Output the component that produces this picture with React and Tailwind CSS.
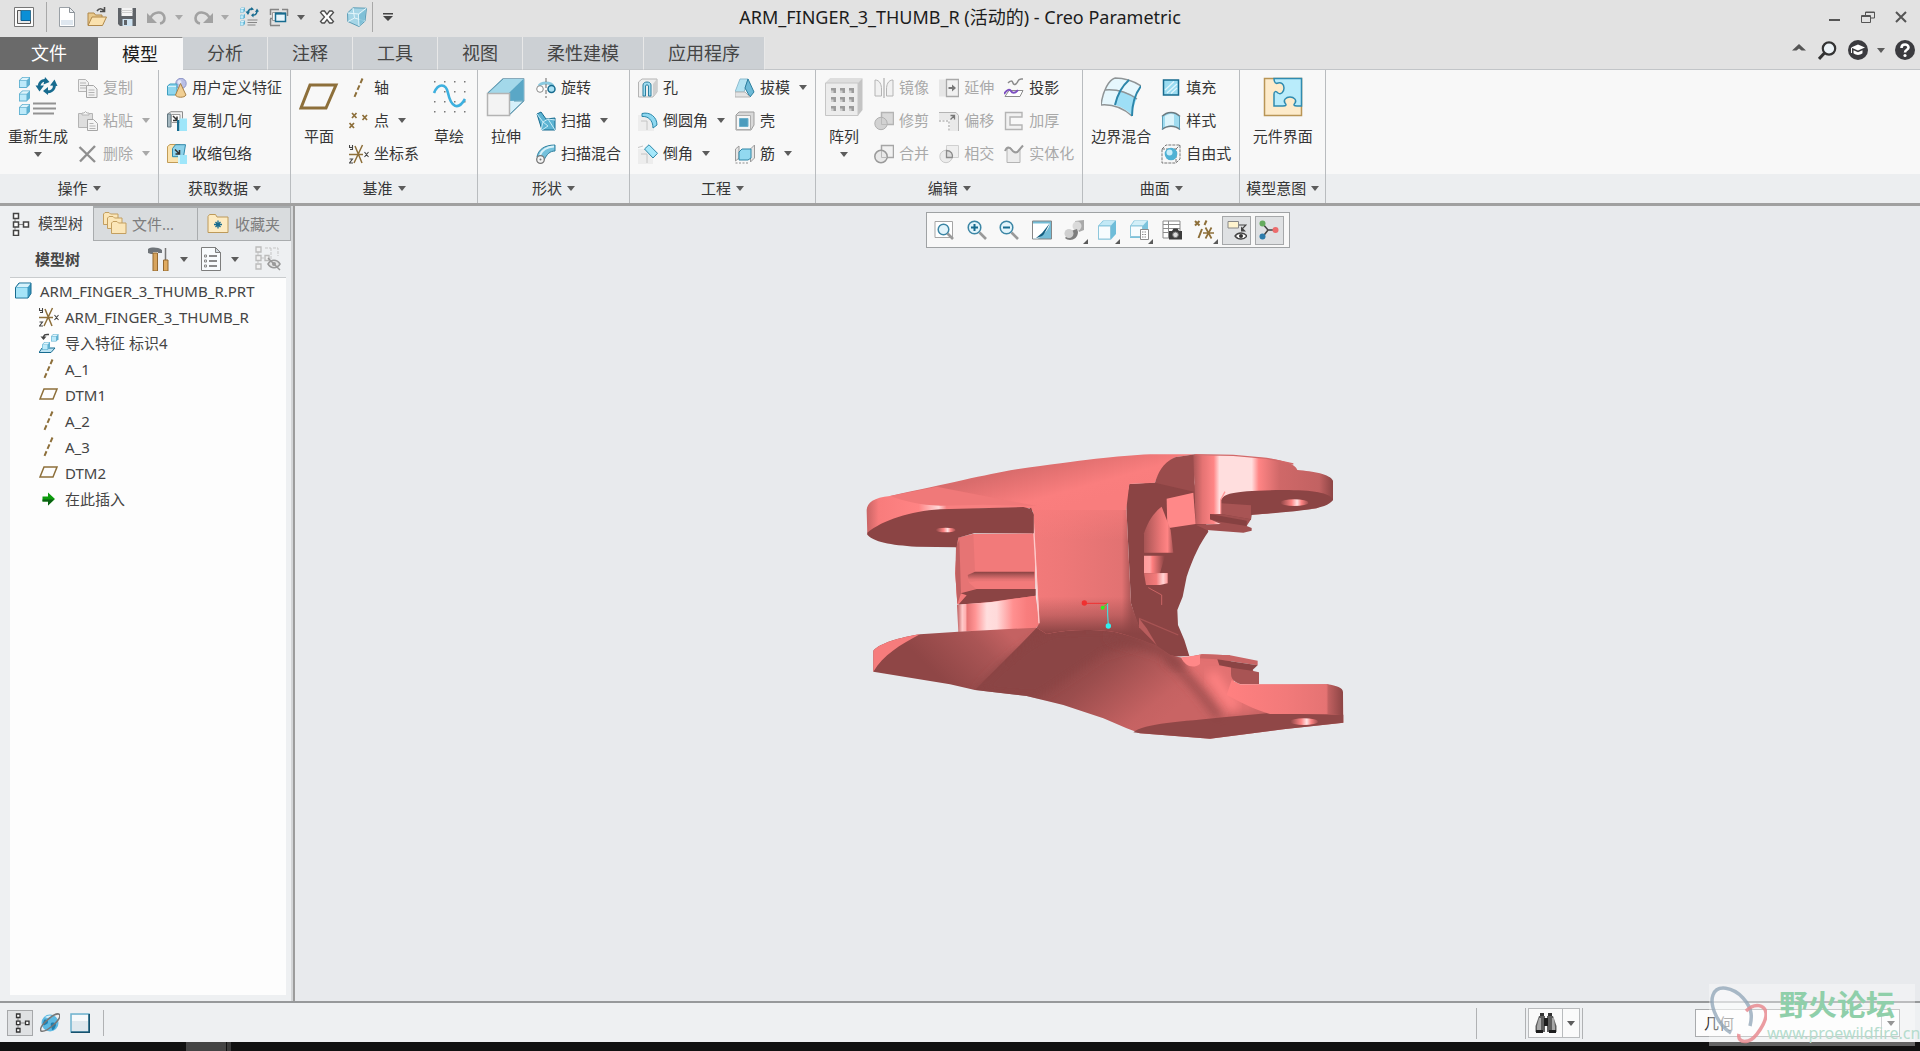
import React, { useState } from 'react';

/* ---------- small shared pieces ---------- */

function Caret({ light }) {
  return (
    <svg width="8" height="5" viewBox="0 0 8 5" className="shrink-0">
      <path d="M0 0h8L4 5z" fill={light ? '#a9a9a9' : '#5c5c5c'} />
    </svg>
  );
}

function Svg({ size = 20, box = 20, children }) {
  return (
    <svg width={size} height={size} viewBox={`0 0 ${box} ${box}`} fill="none" className="shrink-0" aria-hidden="true">
      {children}
    </svg>
  );
}

function Cube({ x, y, s = 8 }) {
  return (
    <g transform={`translate(${x} ${y}) scale(${s / 10})`}>
      <path d="M0 3l3-3h7v7l-3 3H0z" fill="#5fb0d0" />
      <path d="M.8 3L3.400.6H9.400L7 3z" fill="#dff4fb" />
      <path d="M.8 3.600h6v5.600h-6z" fill="#bdeafa" />
    </g>
  );
}

const DARK = '#5a5a5a';
const BLUE = '#176b8f';
const GOLD = '#8d6f3a';
const OFF = '#b4b4b4';

/* ---------- icons, 20px grid unless a bigger box is given ---------- */

const icons = {
  app: (
    <Svg>
      <path d="M.5.5h19v19H.5z" fill="#fdfdfd" stroke="#777" />
      <path d="M3.5 3.5h13v13h-13z" fill="#e8e8e8" stroke="#555" />
      <path d="M7 3.5h9.5v10H7z" fill="#0a8fd6" />
      <path d="M7 4v9.5h9.5" stroke="#0a5f94" />
    </Svg>
  ),
  newFile: (
    <Svg>
      <path d="M2.5.5h10l5 5v14h-15z" fill="#fff" stroke="#9aa0a6" />
      <path d="M4 13h12v5H4z" fill="#dfe7ef" />
      <path d="M12.5.5v5h5z" fill="#eef1f4" stroke="#8c9298" />
    </Svg>
  ),
  open: (
    <Svg>
      <path d="M1 18V6h6l1.500 2H15v3" fill="#e9c98c" stroke="#b0884a" />
      <path d="M1 18.500L5 10h14.500L15.500 18.500z" fill="#fae1ae" stroke="#b0884a" />
      <path d="M10 4c2-3 5-3 7 0M17.500 0v4.500H13" stroke="#4d4d4d" strokeWidth="1.600" />
    </Svg>
  ),
  save: (
    <Svg>
      <path d="M1 1h18v18H3l-2-2z" fill="#5f6368" />
      <path d="M4.500 1h11v8h-11z" fill="#f4f4f4" />
      <path d="M4.500 3.500h11M4.500 5.500h11" stroke="#cfcfcf" />
      <path d="M5.500 12h10v7h-10z" fill="#cfe3f1" />
      <path d="M7 13h3v5H7z" fill="#5f6368" />
    </Svg>
  ),
  undo: (
    <Svg>
      <path d="M3 12C6 4 17 3 17.500 11c0 3-2 5-4.500 5.500" stroke="#a2a2a2" strokeWidth="2.600" />
      <path d="M0 6v10h10z" fill="#a2a2a2" />
    </Svg>
  ),
  redo: (
    <Svg>
      <path d="M17 12C14 4 3 3 2.500 11c0 3 2 5 4.500 5.500" stroke="#a2a2a2" strokeWidth="2.600" />
      <path d="M20 6v10H10z" fill="#a2a2a2" />
    </Svg>
  ),
  regenSmall: (
    <Svg>
      <Cube x={1} y={0.5} s={5} />
      <Cube x={1} y={7} s={5} />
      <Cube x={1} y={13.5} s={5} />
      <path d="M8.500 6C9.500 2.500 11 1.500 13 2M18 4c0 3-2 4.500-4 4" stroke={BLUE} strokeWidth="1.500" />
      <path d="M12.500 0l2.500 2.500-3.500 1zM6.500 4.500h4.500L9 8zM16 5L20 4.500 18 1.500zM14.500 6v4.500L12 8.200z" fill={BLUE} />
      <path d="M8.500 13h10M8.500 15.500h9.500M8.500 18h8" stroke="#868686" strokeWidth="1.200" />
    </Svg>
  ),
  windows: (
    <Svg>
      <path d="M1 2.500h9M1.500 2v6M13 2.500h6M18.500 2v7M1 11.500h4M1 18.500h10M1.500 12v6" stroke="#858585" strokeWidth="1.500" />
      <path d="M3.500 5.500h9v8h-9z" fill="#f4f4f4" stroke="#9b9b9b" />
      <path d="M6.500 6.500h10v8h-10z" fill="#e7f5fb" stroke={BLUE} strokeWidth="1.500" />
      <path d="M6 6.500h11" stroke={BLUE} strokeWidth="2" />
    </Svg>
  ),
  closeWindow: (
    <Svg>
      <path d="M3.500 5.500L5 4h2.500L10 7.500 12.500 4H15l1.500 1.500L12.500 10l4 4.500L15 16h-2.500L10 12.500 7.500 16H5l-1.500-1.500 4-4.500z" fill="#fff" stroke="#4d4d4d" strokeWidth="1.300" />
    </Svg>
  ),
  glass: (
    <Svg>
      <path d="M.5 6L6 .8l13.500.4-1.500 13L12 19.500.8 14.500z" fill="#a5d5e6" stroke="#5c9db6" />
      <path d="M6 1l1.500 10L1 14.500M7.500 11l10.500 3M.5 6l11 1L19.500 1M11.500 7l.5 12" stroke="#e5f6fb" />
      <path d="M12 8l6.500-5.500-1 11L12.500 18z" fill="#6fb7d0" opacity=".7" />
    </Svg>
  ),
  regen: (
    <Svg size={40} box={40}>
      <Cube x={1} y={0} s={11} />
      <Cube x={1} y={13.5} s={11} />
      <Cube x={1} y={27} s={11} />
      <path d="M21 9c1-4.500 4-6 7-5.500M36.500 8c0 5-4 7.500-8 6.500" stroke={BLUE} strokeWidth="2.800" />
      <path d="M27 0l4.500 5-6 2.500zM17.500 8.500H26l-4.500 6zM32 8.500l7.500.5-3-6.500zM30 10v8l-5-4z" fill={BLUE} />
      <path d="M15 26.500h23M15 31.500h23M15 36.500h21" stroke="#929292" strokeWidth="2" />
    </Svg>
  ),
  copy: (
    <Svg>
      <path d="M.5 1.500h7l3 3v9H.5z" fill="#f0f0f0" stroke={OFF} />
      <path d="M2 5h6M2 7.500h6M2 10h6" stroke={OFF} />
      <path d="M8.500 7.500h7l3.500 3.500v8.500H8.500z" fill="#f2f2f2" stroke="#a6a6a6" />
      <path d="M10.500 12h6M10.500 14.500h6M10.500 17h6" stroke={OFF} />
    </Svg>
  ),
  paste: (
    <Svg>
      <path d="M.5 2.500h14v14H.5z" fill="#dedede" stroke={OFF} />
      <path d="M4 4V2h2l1.500-1.500L9 2h2v2z" fill="#f5f5f5" stroke={OFF} />
      <path d="M9.500 8.500h6l4 4v7h-10z" fill="#f5f5f5" stroke="#a6a6a6" />
      <path d="M11.500 12.500h4M11.500 15h6M11.500 17.500h6" stroke={OFF} />
    </Svg>
  ),
  remove: (
    <Svg>
      <path d="M1.500 3l15.500 15M17 2L2 17.500" stroke="#8f8f8f" strokeWidth="2.400" />
    </Svg>
  ),
  udf: (
    <Svg>
      <circle cx="14" cy="5.500" r="5.200" fill="#b9bfe6" stroke="#8f96c8" />
      <circle cx="12.500" cy="4" r="2" fill="#e4e7f7" />
      <path d="M.5 8l2.500-2h7v9l-2 2H.5z" fill="#8fd6ee" stroke="#3f9fc0" />
      <path d="M1 8.500h8" stroke="#d4f1fa" />
      <path d="M13.500 5.500L8.500 17c1 3 9 3 10.500 0z" fill="#f1cf93" stroke="#a98146" />
    </Svg>
  ),
  copyGeom: (
    <Svg>
      <path d="M.5 3L4 .7h11.500v7" fill="#f1f1f1" stroke="#8c8c8c" />
      <path d="M.5 3v13h3.500V3z" fill="#a6b9c1" stroke="#607680" />
      <path d="M4.500 3.500h8.500v8H4.500z" fill="#fff" stroke="#9c9c9c" />
      <path d="M6 5l4 4M10 5.500v4H6" stroke="#333" strokeWidth="1.500" />
      <path d="M10 9h2.500v11H10z" fill={BLUE} />
      <path d="M12.500 7.500H20V20h-7.500z" fill="#9fe6fa" />
    </Svg>
  ),
  shrink: (
    <Svg>
      <path d="M.5 2.500L3 .5h10v18H.5z" fill="#fbe3ae" stroke="#c19c57" />
      <path d="M5.500 4.500L8.500.7h10l-2 12h-11z" fill="#8ed2ea" stroke="#2f88aa" />
      <path d="M8 5.500l4 4M12.500 6v4H8.500" stroke="#333" strokeWidth="1.500" />
      <path d="M11 11h9v9h-9z" fill="#9fe6fa" />
      <path d="M11 11h2v9h-2z" fill="#d1f4fc" />
    </Svg>
  ),
  plane: (
    <Svg size={40} box={40}>
      <path d="M11 8h26L27 31H2z" stroke={GOLD} strokeWidth="3" />
    </Svg>
  ),
  axis: (
    <Svg>
      <path d="M13.500.5L5 20" stroke={GOLD} strokeWidth="2" strokeDasharray="5 2.500" />
    </Svg>
  ),
  point: (
    <Svg>
      <path d="M3 2l4.500 5M7.500 2L3 7M13.500 4l4.500 5M18 4l-4.500 5M.5 12l4.500 5M5 12L.5 17" stroke={GOLD} strokeWidth="1.700" />
    </Svg>
  ),
  csys: (
    <Svg>
      <path d="M0 10.500h14M6 2l7 17M13.500 1L5 19" stroke={GOLD} strokeWidth="1.500" />
      <path d="M.5 1v2.500h3M3.500 1v4.500H1M15.500 8l4 5M19.500 8l-4 5M.5 15h3L.5 19h3.500" stroke="#444" strokeWidth="1.100" />
    </Svg>
  ),
  sketch: (
    <Svg size={40} box={40}>
      {[4, 14, 24, 34].map(y => [5, 15, 25, 35].map(x => (
        <path key={`${x}-${y}`} d={`M${x} ${y}h1.500v1.500h-1.500z`} fill="#777" />
      )))}
      <path d="M5 16C9 6 17 6 19 16c3 14 10 18 17 6" stroke="#3db0df" strokeWidth="2.600" />
    </Svg>
  ),
  extrude: (
    <Svg size={40} box={40}>
      <path d="M1.500 16L17 1.500h21V24L23 38.500" fill="#d6f0fa" stroke="#8ab" />
      <path d="M2 16L17 2h20.500L23 16z" fill="#a3d8ea" />
      <path d="M37.500 2v22L23 16z" fill="#5aa7c6" />
      <path d="M37.500 2L23 16v8l14.500-.5z" fill="#5aa7c6" />
      <path d="M17 2L2 16M23 38l14.500-14H28" stroke="#5797b0" />
      <path d="M1.500 16.500h22v22h-22z" fill="#f3f3f3" stroke="#b3b3b3" strokeWidth="1.500" />
    </Svg>
  ),
  revolve: (
    <Svg>
      <path d="M3 8c2-4 12-4 14 0" stroke="#8ac9df" strokeWidth="3" />
      <circle cx="4" cy="11" r="3.300" fill="#fff" stroke="#8a8a8a" />
      <circle cx="15.500" cy="11" r="3.500" fill="#a9e0f3" stroke={BLUE} strokeWidth="1.500" />
      <path d="M10 0v20" stroke="#666" strokeDasharray="4 2" />
    </Svg>
  ),
  sweep: (
    <Svg>
      <path d="M1 3l4-2 5 7 9-1v12H6z" fill="#5cb3d2" stroke={BLUE} />
      <path d="M1 3l6 8-2 8M7 11l5-3 7 11M12 8l7 1M7 11l5 4-6 4" stroke="#c8ecf7" />
    </Svg>
  ),
  sweptBlend: (
    <Svg>
      <path d="M1 13C2 6 8 1 19 1v6c-5 0-8 3-11 9z" fill="#74c1dc" stroke="#2f7f9e" />
      <path d="M4 11c2-5 6-8 14-8.500" stroke="#d8f2fa" strokeWidth="2" />
      <circle cx="4.500" cy="15.500" r="3.800" fill="#f3f3f3" stroke="#777" strokeWidth="1.300" />
      <circle cx="4.500" cy="15.500" r="1" fill="#777" />
    </Svg>
  ),
  hole: (
    <Svg>
      <path d="M.5 4L4 1h15v13l-4 5H.5z" fill="#eee" stroke="#b4b4b4" />
      <path d="M5 18V7c0-4 8-4 8 0v11h-2.500V8c0-1.500-3-1.500-3 0v10z" fill="#9edcf1" stroke="#2b7f9f" />
      <path d="M15 6l4-5v13l-4 5z" fill="#cfcfcf" />
    </Svg>
  ),
  round: (
    <Svg>
      <path d="M0 4h6c6 1 9 5 10 10v6H0z" fill="#ededed" />
      <path d="M4 2.500C12 .5 19 6 19 14l-4 3C15 9 10 5 4 5.500z" fill="#8fd8f0" stroke="#2c87a9" />
      <path d="M3 10h6v9" stroke="#c4c4c4" />
    </Svg>
  ),
  chamfer: (
    <Svg>
      <path d="M0 5h7l8 8v7H0z" fill="#ededed" />
      <path d="M6.500 5L11 .8l8.500 8.500L15 14z" fill="#a5e8fb" stroke="#2c87a9" />
      <path d="M0 3.500L5 2M3 10h6v9" stroke="#c4c4c4" />
    </Svg>
  ),
  draft: (
    <Svg>
      <path d="M0 14L5 1h8L9 14z" fill="#b4e3f2" stroke="#8dbccf" />
      <path d="M13 1l6 13-4 5-5-9z" fill="#6dbad7" stroke="#2c7f9f" />
      <path d="M0 14h10l5 5H0z" fill="#e4e4e4" stroke="#b4b4b4" />
    </Svg>
  ),
  shell: (
    <Svg>
      <path d="M1 4l3-3h15v13l-3 5H1z" fill="#d9d9d9" stroke="#9d9d9d" />
      <path d="M1.500 4.500h14v14h-14z" fill="#f6f6f6" stroke="#adadad" />
      <path d="M4.500 7.500h8.500v8H4.500z" fill="#4d9cbd" stroke="#6bb0cb" />
    </Svg>
  ),
  rib: (
    <Svg>
      <path d="M.5 5L4 2v12l-3.500 3zM15.500 5L19.500 1v13l-4 4z" fill="#e5e5e5" stroke="#9b9b9b" />
      <path d="M4 8l3-3h9v9l-3 2H4z" fill="#92d9f0" stroke="#3186a6" />
      <path d="M.5 19h14" stroke="#8d8d8d" strokeDasharray="2 1.500" />
    </Svg>
  ),
  pattern: (
    <Svg size={40} box={40}>
      <path d="M1.500 6L6 1.500h32.500V33L34 38.500H1.500z" fill="#c4c4c4" />
      <path d="M1.500 6L6 1.500h32.500L34 6z" fill="#dedede" />
      <path d="M1.500 6H34v32.500H1.500z" fill="#ececec" stroke="#c6c6c6" />
      {[11, 20, 29].map(y => [7, 16, 25].map(x => (
        <g key={`${x}-${y}`}>
          <path d={`M${x} ${y}h5v5h-5z`} fill="#9b9b9b" />
          <path d={`M${x} ${y + 2.5}h2.500v2.500h-2.500z`} fill="#cfcfcf" />
        </g>
      )))}
    </Svg>
  ),
  mirror: (
    <Svg>
      <path d="M1 2c5 0 6.500 5 6.500 9v7H1zM19 2c-5 0-6.500 5-6.500 9v7H19z" fill="#f1f1f1" stroke={OFF} />
      <path d="M10 0v20" stroke="#a0a0a0" />
    </Svg>
  ),
  trim: (
    <Svg>
      <path d="M7.500 1.500h12v12h-12z" fill="#d9d9d9" stroke={OFF} strokeWidth="1.500" />
      <circle cx="7" cy="12.500" r="6.200" fill="#d2d2d2" stroke="#b0b0b0" />
      <path d="M7.500 7v6.500H13" stroke="#bbb" />
    </Svg>
  ),
  merge: (
    <Svg>
      <path d="M7.500 1.500h12v12h-12z" fill="#f1f1f1" stroke="#a6a6a6" strokeWidth="1.500" />
      <circle cx="7" cy="12.500" r="6.200" fill="#e9e9e9" stroke="#9a9a9a" strokeWidth="1.500" />
      <path d="M7.500 7v6.500H13" stroke="#bbb" />
    </Svg>
  ),
  extend: (
    <Svg>
      <path d="M0 1.500h7v17H0z" fill="#e6e6e6" />
      <path d="M7.500 1.500h12v17h-12z" fill="#f1f1f1" stroke="#a9a9a9" strokeWidth="1.300" />
      <path d="M9.500 10h5" stroke="#777" strokeWidth="2" />
      <path d="M13 6.500l4 3.500-4 3.500z" fill="#777" />
    </Svg>
  ),
  offset: (
    <Svg>
      <path d="M0 1.500h17l2.500 2.500v16H11V9H0z" fill="#e9e9e9" />
      <path d="M0 1.500h17l2.500 3V20" stroke={OFF} />
      <path d="M0 10h10v10" stroke="#999" strokeDasharray="2 1.500" />
      <path d="M11.500 8.500L15 5M11.500 4.500h4v4" stroke="#777" strokeWidth="1.300" />
    </Svg>
  ),
  intersect: (
    <Svg>
      <path d="M7.500 1.500h12v12h-12z" fill="#efefef" stroke="#d0d0d0" />
      <circle cx="7" cy="12.500" r="6.200" fill="#ececec" stroke="#cacaca" />
      <path d="M7.500 6.500c5 0 6.500 4 5.800 7H7.500z" fill="#dcdcdc" stroke="#8c8c8c" strokeWidth="1.300" />
    </Svg>
  ),
  project: (
    <Svg>
      <path d="M4 5c2-2 4-3 5 0s4 1 5-2 3-2 5-2" stroke="#8b8b8b" strokeWidth="1.500" />
      <path d="M1 18.500l4-6h14l-3 6z" fill="#fff" stroke="#8b8b8b" />
      <path d="M0 16c3-5 6-5 7-3s4 3 7-1" stroke="#7d4fc0" strokeWidth="2" />
    </Svg>
  ),
  thicken: (
    <Svg>
      <path d="M18 1.500H1.500v17H18v-4.500H6V6h12z" fill="#f1f1f1" stroke={OFF} strokeWidth="1.400" />
    </Svg>
  ),
  solidify: (
    <Svg>
      <path d="M3 6v12.500h13V5c-2 5-7 5-8 1S4 4 3 6z" fill="#ececec" stroke={OFF} />
      <path d="M1 7c2-5 5-4 6.500-1.500S13 10 15 6l4-4.500" stroke="#9a9a9a" strokeWidth="2" />
    </Svg>
  ),
  boundary: (
    <Svg size={40} box={40}>
      <path d="M0 28C2 13 8 3 14 1c9 0 17 2 26 8-6 8-9 20-9 30C22 31 12 27 0 28z" fill="#e6f7fd" />
      <path d="M18 14c7 1 13 3 18 7-3 6-4 12-5 17-4-4-10-8-17-10z" fill="#9edff6" />
      <path d="M0 28C2 13 8 3 14 1M4 13c12-1 22 2 32 9M0 28c12-1 22 3 31 11M14 1c9 0 17 2 26 8" stroke="#8f9496" strokeWidth="1.500" />
      <path d="M28 3c-8 7-12 16-14 25M40 9c-6 8-9 20-9 30" stroke="#2c86aa" strokeWidth="2" />
    </Svg>
  ),
  fill: (
    <Svg>
      <path d="M2.500 2h15v15h-15z" fill="#9bdcf1" stroke={BLUE} strokeWidth="1.500" />
      <path d="M4 12L13 3.500M6 15L16 6M10 15.500l6-5.500" stroke="#e0f6fd" strokeWidth="1.200" />
    </Svg>
  ),
  style: (
    <Svg>
      <path d="M1.500 5c5-5 12-5 17 0v13c-5-4-12-4-17 0z" fill="#9fdcf0" />
      <path d="M4 5C8 2.500 11 2.500 13 3.500v11C10 14 7 14.500 4 16z" fill="#dcf4fb" />
      <path d="M1 5.500c5-5.500 13-5.500 18 0M1 18.500c5-4.500 13-4.500 18 0" stroke="#6b7a80" strokeWidth="1.500" />
      <path d="M1.500 5v13.500M18.500 5v13.500" stroke="#5c9db6" />
    </Svg>
  ),
  freestyle: (
    <Svg>
      <path d="M1 5l4-4h14v14l-4 4H1zM1 5h14v14M15 5l4-4" stroke="#777" strokeDasharray="3 1" />
      <circle cx="10" cy="10" r="6.300" fill="#4fb1d4" />
      <circle cx="8.500" cy="8.500" r="3" fill="#c9effb" />
    </Svg>
  ),
  component: (
    <Svg size={40} box={40}>
      <path d="M1.500 1.500h37v37h-37z" fill="#fdebcb" stroke="#b99556" strokeWidth="1.500" />
      <path d="M11 1.500h27.500V29H34c-3 0-4-1-2-3 2-3-1-6-5-6s-7 3-5 6c2 2 1 3-2 3h-9V17c0-3 2-3 4-1 3 2 6-1 6-5s-3-6-6-5c-2 1-4 0-4-4.500z" fill="#b9ecfb" stroke="#2f8bb0" strokeWidth="1.500" />
    </Svg>
  ),

  /* graphics toolbar */
  refit: (
    <Svg>
      <path d="M1 1.500h17.500v16H1z" fill="#fff" stroke="#a5a5a5" />
      <circle cx="9.500" cy="9.500" r="5.300" fill="#e2f4fb" stroke="#3c86a5" strokeWidth="1.500" />
      <path d="M13.500 13.500l5.500 5.500" stroke="#999" strokeWidth="2.600" />
    </Svg>
  ),
  zoomIn: (
    <Svg>
      <path d="M12.500 12.500l6.500 6.500" stroke="#999" strokeWidth="2.600" />
      <circle cx="7.500" cy="7.500" r="6.300" fill="#e2f4fb" stroke="#3c86a5" strokeWidth="1.500" />
      <path d="M7.500 4v7M4 7.500h7" stroke={BLUE} strokeWidth="2" />
    </Svg>
  ),
  zoomOut: (
    <Svg>
      <path d="M12.500 12.500l6.500 6.500" stroke="#999" strokeWidth="2.600" />
      <circle cx="7.500" cy="7.500" r="6.300" fill="#e2f4fb" stroke="#3c86a5" strokeWidth="1.500" />
      <path d="M4 7.500h7" stroke={BLUE} strokeWidth="2" />
    </Svg>
  ),
  repaint: (
    <Svg>
      <path d="M.5 1h19v18H.5z" fill="#74bcd6" stroke="#868686" />
      <path d="M1 3.500h17C17 9 12 14 6 18.500H1z" fill="#fff" />
      <path d="M18 3l-8 10-6 5c3-1 6-1 8-4z" fill="#155f80" />
    </Svg>
  ),
  shading: (
    <Svg>
      <path d="M11 1l9-1v10l-5 2z" fill="#a9a9a9" />
      <circle cx="13" cy="6" r="4.500" fill="#dadada" />
      <path d="M7 11l6-2 1 3c0 5-4 8-8 8-2 0-4-1-5-2z" fill="#7e7e7e" />
      <circle cx="5" cy="13.500" r="4.500" fill="#cfcfcf" />
    </Svg>
  ),
  view: (
    <Svg>
      <path d="M1 6l5-5.500h13V14l-5 5.500H1z" fill="#6fbdd9" />
      <path d="M2 5.500L6.500 1H18l-4 4.500z" fill="#c2e9f6" />
      <path d="M1.500 6h12v13h-12z" fill="#f7fcfe" stroke="#8fc7dc" />
    </Svg>
  ),
  viewManager: (
    <Svg>
      <path d="M1 6l4-5.500h14V11l-5 7H1z" fill="#7cc3dc" />
      <path d="M2 5.500L5.500 1H18l-4 4.500z" fill="#d3eff8" />
      <path d="M1.500 6h12v10.500h-12z" fill="#f7fcfe" stroke="#8fc7dc" />
      <path d="M11.500 9.500h8v10h-8z" fill="#fff" stroke="#8b8b8b" />
      <path d="M13 12h5M13 14.500h5M13 17h5" stroke="#8b8b8b" strokeDasharray="1.500 1" />
    </Svg>
  ),
  capture: (
    <Svg>
      <path d="M1 1h17v17H1z" fill="#fff" stroke="#8b8b8b" />
      <path d="M1 4.500h17M1 8.500h17M1 12.500h7M6.500 1v17" stroke="#8b8b8b" />
      <path d="M7 11h3l1.500-2.500h4L17 11h3v8.500H7z" fill="#3c3c3c" />
      <circle cx="13.500" cy="14.800" r="2.800" fill="#dcdcdc" stroke="#777" />
    </Svg>
  ),
  datum: (
    <Svg>
      <path d="M1 1l4.500 4.500M5.500 1L1 5.500M12.500.5L10.500 5M8 9l-3.500 9" stroke={GOLD} strokeWidth="2" />
      <path d="M9 13h11M11.500 7.500l6 11M17.500 7.500l-6 11" stroke={GOLD} strokeWidth="1.700" />
    </Svg>
  ),
  annotation: (
    <Svg>
      <path d="M1 1.500h10.500v6.500H1z" fill="#fff4cf" stroke="#888" />
      <path d="M12 5h7l-4 4" stroke="#444" strokeWidth="1.200" />
      <path d="M14 6.500v5h5z" fill="#444" />
      <path d="M8 16c3-4 9-4 12 0-3 4-9 4-12 0z" fill="#fff" stroke="#444" strokeWidth="1.300" />
      <circle cx="14" cy="16" r="2" fill="#333" />
    </Svg>
  ),
  spin: (
    <Svg>
      <path d="M3.500 3.500L9 10h7M9 10l-5 6.500" stroke="#444" strokeWidth="1.500" />
      <circle cx="3.500" cy="3.500" r="3" fill="#65ab5e" />
      <circle cx="16.500" cy="10" r="3" fill="#ec6c6c" />
      <circle cx="3.500" cy="16.500" r="3" fill="#2c7cab" />
    </Svg>
  ),

  /* navigator */
  tree: (
    <Svg size={24} box={24}>
      <path d="M6 6v14M8 12.500h8" stroke="#8a8a8a" />
      <path d="M4.500 1.500h5v5h-5zM4.500 10h5v5h-5zM4.500 18.500h5v5h-5zM14.500 10h5v5h-5z" fill="#fff" stroke="#444" strokeWidth="1.500" />
    </Svg>
  ),
  folders: (
    <Svg size={26} box={26}>
      {[[1, 1], [5, 5], [9, 10]].map(([x, y]) => (
        <path key={x} transform={`translate(${x} ${y})`} d="M.5 12.500V2L2 .5h4L7.500 2H15v10.500z" fill="#fbe6b8" stroke="#c39f60" />
      ))}
    </Svg>
  ),
  favorite: (
    <Svg size={24} box={24}>
      <path d="M2 20.500V4.500L3.500 2.500h6L11 5h11v15.500z" fill="#fdebc2" stroke="#bd9a5a" />
      <path d="M12 8.500v8M8 12.500h8M9.500 10l5 5M14.500 10l-5 5" stroke={BLUE} strokeWidth="1.300" />
    </Svg>
  ),
  tools: (
    <Svg size={24} box={24}>
      <path d="M1 2c3-2 10-2 14 1v3H11V5H6v2H4L1 6z" fill="#6f7479" />
      <path d="M6 6h4.500v18H6z" fill="#d7a45e" stroke="#94682f" />
      <path d="M18.500 1v13" stroke="#777" strokeWidth="1.500" />
      <path d="M16.500 13h4.500v11h-4.500z" fill="#e0ab61" stroke="#94682f" />
    </Svg>
  ),
  list: (
    <Svg size={24} box={24}>
      <path d="M2.500.5h14l5 5v18h-19z" fill="#f8fbfd" stroke="#7d7d7d" />
      <path d="M16.500.5v5h5z" fill="#cfd8de" stroke="#7d7d7d" />
      <path d="M10 9h8M10 14h8M10 19h8" stroke="#666" strokeWidth="1.300" />
      <path d="M5.500 8h2v2h-2zM5.500 13h2v2h-2zM5.500 18h2v2h-2z" stroke="#888" />
    </Svg>
  ),
  treeHidden: (
    <Svg size={26} box={26}>
      <path d="M3 6v14M6 12h6M10 2h6M16 2v18M18 2h5v8" stroke="#c5c5c5" strokeDasharray="3 1" />
      <path d="M1 1h5v5H1zM1 9.500h5v5H1zM1 18h5v5H1zM10 9.500h4v5h-4z" fill="#f0f0f0" stroke="#bbb" strokeWidth="1.300" />
      <path d="M13 18c3-5 9-5 12 0-3 5-9 5-12 0z" fill="#e4e4e4" stroke="#999" strokeWidth="1.500" />
      <circle cx="19" cy="18" r="2" fill="#999" />
      <path d="M13 12l12 12" stroke="#999" strokeWidth="1.500" />
    </Svg>
  ),
  part: (
    <Svg>
      <path d="M1.500 6.500L5 2h12v10.500L14 17H1.500z" fill="#3b98c0" stroke={BLUE} />
      <path d="M2.500 6L5.500 2.500h11L14 6z" fill="#d6f2fb" />
      <path d="M2 6.500h11.500v10H2z" fill="#a5e4f8" />
    </Svg>
  ),
  importFeature: (
    <Svg>
      <Cube x={12} y={1} s={7.5} />
      <path d="M10 1.500C6 1 4.500 2 4.500 5" stroke="#444" strokeWidth="1.500" />
      <path d="M1.500 3.500h6l-3 3.500z" fill="#444" />
      <path d="M0 19.500l3-4.500h13l-4 4.500z" fill="#bce3f2" stroke={BLUE} />
      <Cube x={3} y={9} s={8} />
    </Svg>
  ),
  planeSmall: (
    <Svg>
      <path d="M5 4h13l-4 10H1z" stroke={GOLD} strokeWidth="1.500" />
    </Svg>
  ),
  insert: (
    <Svg>
      <path d="M3.500 7.500H9V3.500l7 6.500-7 6.500v-4H3.500z" fill="#0d9b0d" />
      <path d="M3.500 10.500H15L9 16.500v-4H3.500z" fill="#0a5f12" />
    </Svg>
  ),
  globe: (
    <Svg>
      <circle cx="10" cy="10" r="8.500" fill="#5cb9e2" />
      <path d="M4 7c2-1 4 0 4 2s-2 2-3 3-2-1-2-2zM11 10c3-1 5 0 5 2-1 3-2 5-4 5 0-3-2-4-1-7z" fill="#1f7fae" />
      <path d="M5 4c3-2 6-2 8 0-3 0-5 2-8 0z" fill="#d2eefa" />
      <path d="M1 18C-2 13 16-2 19.500 1.500 22 6 6 20 1 18z" stroke="#777" strokeWidth="1.500" />
    </Svg>
  ),
  square: (
    <Svg>
      <path d="M1 1h18v18H1z" fill="#dfe8ee" stroke="#6fb3cf" strokeWidth="1.500" />
      <path d="M2 2h16v6H2z" fill="#f6f9fb" />
      <path d="M19.200 1v18.200H1" stroke="#17516d" strokeWidth="1.600" />
    </Svg>
  ),
  binoculars: (
    <Svg size={22} box={22}>
      <path d="M5 1h4v4H5zM13 1h4v4h-4z" fill="#333" />
      <path d="M4 4h6v16H.5V14zM18 4h-6v16h9.500V14z" fill="#5d5d5d" />
      <path d="M4 6h2v12H2v-4zM17 6h2l1 9v3h-3z" fill="#a7a7a7" />
      <path d="M9 6h4v8H9zM1 18h7v3H1zM14 18h7v3h-7z" fill="#1d1d1d" />
    </Svg>
  ),
};

/* ---------- data ---------- */

const tabs = ['模型', '分析', '注释', '工具', '视图', '柔性建模', '应用程序'];

const groups = [
  {
    title: '操作',
    items: [
      { big: true, icon: 'regen', label: '重新生成', caret: true },
      [
        { icon: 'copy', label: '复制', off: true },
        { icon: 'paste', label: '粘贴', off: true, caret: true },
        { icon: 'remove', label: '删除', off: true, caret: true },
      ],
    ],
  },
  {
    title: '获取数据',
    items: [
      [
        { icon: 'udf', label: '用户定义特征' },
        { icon: 'copyGeom', label: '复制几何' },
        { icon: 'shrink', label: '收缩包络' },
      ],
    ],
  },
  {
    title: '基准',
    items: [
      { big: true, icon: 'plane', label: '平面' },
      [
        { icon: 'axis', label: '轴' },
        { icon: 'point', label: '点', caret: true },
        { icon: 'csys', label: '坐标系' },
      ],
      { big: true, icon: 'sketch', label: '草绘' },
    ],
  },
  {
    title: '形状',
    items: [
      { big: true, icon: 'extrude', label: '拉伸' },
      [
        { icon: 'revolve', label: '旋转' },
        { icon: 'sweep', label: '扫描', caret: true },
        { icon: 'sweptBlend', label: '扫描混合' },
      ],
    ],
  },
  {
    title: '工程',
    items: [
      [
        { icon: 'hole', label: '孔' },
        { icon: 'round', label: '倒圆角', caret: true },
        { icon: 'chamfer', label: '倒角', caret: true },
      ],
      [
        { icon: 'draft', label: '拔模', caret: true },
        { icon: 'shell', label: '壳' },
        { icon: 'rib', label: '筋', caret: true },
      ],
    ],
  },
  {
    title: '编辑',
    items: [
      { big: true, icon: 'pattern', label: '阵列', caret: true },
      [
        { icon: 'mirror', label: '镜像', off: true },
        { icon: 'trim', label: '修剪', off: true },
        { icon: 'merge', label: '合并', off: true },
      ],
      [
        { icon: 'extend', label: '延伸', off: true },
        { icon: 'offset', label: '偏移', off: true },
        { icon: 'intersect', label: '相交', off: true },
      ],
      [
        { icon: 'project', label: '投影' },
        { icon: 'thicken', label: '加厚', off: true },
        { icon: 'solidify', label: '实体化', off: true },
      ],
    ],
  },
  {
    title: '曲面',
    items: [
      { big: true, icon: 'boundary', label: '边界混合' },
      [
        { icon: 'fill', label: '填充' },
        { icon: 'style', label: '样式' },
        { icon: 'freestyle', label: '自由式' },
      ],
    ],
  },
  {
    title: '模型意图',
    items: [{ big: true, icon: 'component', label: '元件界面' }],
  },
];

const treeItems = [
  { icon: 'csys', label: 'ARM_FINGER_3_THUMB_R' },
  { icon: 'importFeature', label: '导入特征 标识4' },
  { icon: 'axis', label: 'A_1' },
  { icon: 'planeSmall', label: 'DTM1' },
  { icon: 'axis', label: 'A_2' },
  { icon: 'axis', label: 'A_3' },
  { icon: 'planeSmall', label: 'DTM2' },
  { icon: 'insert', label: '在此插入' },
];

const viewTools = [
  { icon: 'refit', name: '重新调整' },
  { icon: 'zoomIn', name: '放大' },
  { icon: 'zoomOut', name: '缩小' },
  { icon: 'repaint', name: '重画' },
  { icon: 'shading', name: '显示样式', more: true },
  { icon: 'view', name: '已保存方向', more: true },
  { icon: 'viewManager', name: '视图管理器', more: true },
  { icon: 'capture', name: '捕获' },
  { icon: 'datum', name: '基准显示', more: true },
  { icon: 'annotation', name: '注释显示', on: true },
  { icon: 'spin', name: '旋转中心', on: true },
];

/* ---------- header ---------- */

function QuickButton({ icon, name, caret, light }) {
  return (
    <button aria-label={name} className="flex items-center gap-2">
      {icons[icon]}
      {caret && <Caret light={light} />}
    </button>
  );
}

function TitleBar() {
  return (
    <header className="grid h-[37px] shrink-0 grid-cols-[1fr_auto_1fr] items-start">
      <div className="flex h-[34px] items-center pl-[14px]">
        <QuickButton icon="app" name="Creo" />
        <span className="ml-3 mr-[10px] h-[30px] w-px bg-[#a8a8a8]" />
        <div className="flex items-center gap-[10px]">
          <QuickButton icon="newFile" name="新建" />
          <QuickButton icon="open" name="打开" />
          <QuickButton icon="save" name="保存" />
          <QuickButton icon="undo" name="撤消" caret light />
          <QuickButton icon="redo" name="重做" caret light />
          <QuickButton icon="regenSmall" name="重新生成" />
          <QuickButton icon="windows" name="窗口" caret />
        </div>
        <div className="flex items-center gap-[10px] pl-3">
          <QuickButton icon="closeWindow" name="关闭" />
          <QuickButton icon="glass" name="外观" />
        </div>
        <span className="ml-[5px] mr-[10px] h-[30px] w-px bg-[#a8a8a8]" />
        <button aria-label="自定义快速访问工具栏">
          <svg width="10" height="8" viewBox="0 0 10 8">
            <path d="M0 0h10v1.500H0zM0 3h10L5 8z" fill="#444" />
          </svg>
        </button>
      </div>
      <h1 className="text-[18px] leading-[34px] text-[#1c1c1c]">ARM_FINGER_3_THUMB_R (活动的) - Creo Parametric</h1>
      <div className="flex h-[34px] items-center justify-end gap-5 pr-[13px]">
        <button aria-label="最小化">
          <svg width="13" height="14" viewBox="0 0 13 14"><path d="M1 9h11v2H1z" fill="#555" /></svg>
        </button>
        <button aria-label="还原">
          <svg width="14" height="12" viewBox="0 0 14 12" fill="none" stroke="#555">
            <path d="M4.500 4V1h9v6H10" />
            <path d="M4 1.500h10" />
            <path d="M.5 4.500h9v7h-9zM0 5.500h10" />
          </svg>
        </button>
        <button aria-label="关闭程序">
          <svg width="12" height="12" viewBox="0 0 12 12"><path d="M1 1l10 10M11 1L1 11" stroke="#555" strokeWidth="2" /></svg>
        </button>
      </div>
    </header>
  );
}

function TabBar({ active, onSelect }) {
  return (
    <nav className="flex h-[33px] shrink-0 items-end text-[18px]">
      <button className="h-[33px] w-[98px] bg-[#6a6a6a] text-white">文件</button>
      {tabs.map(tab => (
        <button
          key={tab}
          onClick={() => onSelect(tab)}
          className={
            active === tab
              ? 'h-[33px] border-r border-t border-r-[#f8f8f8] border-t-[#8f8f8f] bg-[#f8f8f8] px-6 text-[#1c1c1c]'
              : 'h-[33px] border-b border-r border-b-[#c2c5c8] border-r-[#e8e8e8] bg-[#ccd0d4] px-6 text-[#454545]'
          }
        >
          {tab}
        </button>
      ))}
      <div className="flex h-[33px] grow items-center justify-end border-b border-[#c2c5c8] pb-[6px] pr-[5px]">
        <button aria-label="最小化功能区" className="mr-3 pb-1">
          <svg width="14" height="8" viewBox="0 0 14 8"><path d="M7 0l7 6.500H9.500L7 4.500 4.500 6.500H0z" fill="#555" /></svg>
        </button>
        <button aria-label="搜索" className="mr-[11px]">
          <svg width="19" height="19" viewBox="0 0 19 19" fill="none">
            <circle cx="11" cy="7.500" r="6.200" fill="#edf3f7" stroke="#333" strokeWidth="2.200" />
            <path d="M6.500 12L1 18" stroke="#333" strokeWidth="3" />
          </svg>
        </button>
        <button aria-label="学习" className="mr-[10px] flex items-center gap-[9px]">
          <svg width="20" height="20" viewBox="0 0 20 20" fill="none">
            <circle cx="10" cy="10" r="10" fill="#3b3b3f" />
            <path d="M10 4.500l7 3-7 3-7-3z" fill="#fff" />
            <path d="M5.500 10.200l4.500 2 4.500-2v3c-3 2.300-6 2.300-9 0z" fill="#fff" />
            <path d="M3.500 8v5" stroke="#fff" />
          </svg>
          <Caret />
        </button>
        <button aria-label="帮助">
          <svg width="20" height="20" viewBox="0 0 20 20" fill="none">
            <circle cx="10" cy="10" r="10" fill="#3b3b3f" />
            <path d="M6.500 8c0-4.500 7-4.500 7-.5 0 2.500-3.500 2-3.500 5" stroke="#fff" strokeWidth="2.600" />
            <circle cx="10" cy="15.500" r="1.600" fill="#fff" />
          </svg>
        </button>
      </div>
    </nav>
  );
}

/* ---------- ribbon ---------- */

function BigButton({ icon, label, caret }) {
  return (
    <button className="flex min-w-10 flex-col items-center pt-[6px]">
      {icons[icon]}
      <span className="mt-[9px] leading-5">{label}</span>
      {caret && <span className="mt-[6px] flex"><Caret /></span>}
    </button>
  );
}

function SmallButton({ icon, label, caret, off }) {
  return (
    <button disabled={off} className={`flex h-[33px] items-center ${off ? 'text-[#a9a9a9]' : ''}`}>
      {icons[icon]}
      <span className={caret ? 'ml-[5px] mr-[9px]' : 'ml-[5px]'}>{label}</span>
      {caret && <Caret light={off} />}
    </button>
  );
}

function Ribbon() {
  return (
    <div className="flex shrink-0 border-b-[3px] border-[#a0a0a0] bg-[#f8f8f8] text-[15px] text-[#363636]">
      {groups.map(g => (
        <section key={g.title} className="flex flex-col border-r border-[#b9bcbf]">
          <div className="flex h-[104px] items-start justify-center gap-[10px] px-2 pt-px">
            {g.items.map((item, i) =>
              item.big ? (
                <BigButton key={i} {...item} />
              ) : (
                <div key={i} className="flex flex-col">
                  {item.map(b => (
                    <SmallButton key={b.label} {...b} />
                  ))}
                </div>
              )
            )}
          </div>
          <button className="flex h-[29px] items-center justify-center gap-[5px] bg-[#eceef0] px-[6px]">
            {g.title}
            <Caret />
          </button>
        </section>
      ))}
      <div className="flex grow flex-col">
        <div className="grow" />
        <div className="h-[29px] bg-[#eceef0]" />
      </div>
    </div>
  );
}

/* ---------- navigator ---------- */

function Navigator() {
  return (
    <aside className="flex w-[295px] shrink-0 flex-col border-r-2 border-[#9c9c9c] bg-[#eef0f2] text-[15px] text-[#454545]">
      <div className="flex h-[35px] border-r-2 border-[#d4d6d8]">
        <button className="flex w-[93px] items-center gap-[5px] pl-[9px]">
          {icons.tree}
          模型树
        </button>
        <button className="flex w-[105px] items-center gap-1 border border-t-2 border-[#a9acae] bg-[#d9dcde] pl-2 text-[#7d7d7d]">
          {icons.folders}
          文件...
        </button>
        <button className="flex w-[93px] items-center gap-[5px] border border-l-0 border-t-2 border-[#a9acae] bg-[#d9dcde] pl-2 text-[#7d7d7d]">
          {icons.favorite}
          收藏夹
        </button>
      </div>
      <div className="flex h-9 items-center border-r-2 border-[#d4d6d8] pl-[35px] pr-[10px]">
        <h2 className="grow font-bold">模型树</h2>
        <button aria-label="设置" className="mr-[11px] flex items-center gap-[9px]">
          {icons.tools}
          <Caret />
        </button>
        <button aria-label="显示" className="mr-4 flex items-center gap-2">
          {icons.list}
          <Caret />
        </button>
        <button aria-label="隐藏">{icons.treeHidden}</button>
      </div>
      <div className="flex grow border-r-2 border-[#d4d6d8] pb-[6px] pl-[10px] pr-[5px]">
        <ul className="grow border-t border-[#c9ccce] bg-[#fdfdfd]">
          <li>
            <button className="flex h-[26px] items-center gap-[6px] pl-1">
              {icons.part}
              ARM_FINGER_3_THUMB_R.PRT
            </button>
            <ul>
              {treeItems.map(t => (
                <li key={t.label}>
                  <button className="flex h-[26px] items-center gap-[6px] pl-[29px]">
                    {icons[t.icon]}
                    {t.label}
                  </button>
                </li>
              ))}
            </ul>
          </li>
        </ul>
      </div>
    </aside>
  );
}

/* ---------- 3D model ---------- */

function Stops({ list }) {
  return list.map(([at, color]) => <stop key={at} offset={at} stopColor={color} />);
}

function Model() {
  return (
    <svg viewBox="295 206 1625 795" className="absolute inset-0 h-full w-full" role="img" aria-label="ARM_FINGER_3_THUMB_R">
      <defs>
        <linearGradient id="top" gradientUnits="userSpaceOnUse" x1="560" y1="70" x2="600" y2="215">
          <Stops list={[[0, '#d96c6c'], [0.25, '#e57272'], [0.7, '#fa7e7e'], [1, '#f97d7d']]} />
        </linearGradient>
        <linearGradient id="body" gradientUnits="userSpaceOnUse" x1="550" y1="0" x2="845" y2="0">
          <Stops list={[[0, '#f27a7a'], [0.3, '#ee7878'], [0.9, '#e27272'], [1, '#a95555']]} />
        </linearGradient>
        <linearGradient id="fade" gradientUnits="userSpaceOnUse" x1="0" y1="470" x2="0" y2="580">
          <stop offset="0" stopColor="#8b4444" stopOpacity="0" />
          <stop offset=".5" stopColor="#8b4444" stopOpacity=".4" />
          <stop offset="1" stopColor="#8b4444" />
        </linearGradient>
        <linearGradient id="bodyTop" gradientUnits="userSpaceOnUse" x1="0" y1="130" x2="0" y2="300">
          <stop offset="0" stopColor="#fb7e7e" />
          <stop offset="1" stopColor="#fb7e7e" stopOpacity="0" />
        </linearGradient>
        <linearGradient id="earLeft" gradientUnits="userSpaceOnUse" x1="50" y1="0" x2="290" y2="0">
          <Stops list={[[0, '#c86464'], [0.15, '#f87c7c'], [0.65, '#ff8484'], [0.9, '#ffd9d9'], [1, '#f88080']]} />
        </linearGradient>
        <linearGradient id="earRight" gradientUnits="userSpaceOnUse" x1="1028" y1="0" x2="1450" y2="0">
          <Stops list={[[0, '#a85555'], [0.07, '#e57373'], [0.15, '#ff8686'], [0.19, '#ffdede'], [0.42, '#ffdede'], [0.47, '#ff8585'], [0.62, '#cf6868'], [0.9, '#c26262'], [1, '#8b4444']]} />
        </linearGradient>
        <linearGradient id="post" gradientUnits="userSpaceOnUse" x1="322" y1="0" x2="568" y2="0">
          <Stops list={[[0, '#c06060'], [0.06, '#ffcaca'], [0.1, '#ffb0b0'], [0.12, '#e87575'], [0.22, '#ff9494'], [0.36, '#ffdede'], [0.48, '#ffdada'], [0.68, '#ff9090'], [0.85, '#f87d7d'], [1, '#f47a7a']]} />
        </linearGradient>
        <linearGradient id="slot" gradientUnits="userSpaceOnUse" x1="0" y1="396" x2="0" y2="428">
          <Stops list={[[0, '#8b4444'], [0.3, '#b45a5a'], [0.7, '#e57373'], [1, '#ee7878']]} />
        </linearGradient>
        <linearGradient id="lobe" gradientUnits="userSpaceOnUse" x1="470" y1="575" x2="300" y2="745">
          <Stops list={[[0, '#c46262'], [0.35, '#aa5555'], [1, '#8f4646']]} />
        </linearGradient>
        <linearGradient id="belly" gradientUnits="userSpaceOnUse" x1="680" y1="600" x2="900" y2="870">
          <Stops list={[[0, '#8b4444'], [0.35, '#9b4d4d'], [0.85, '#c56262'], [1, '#c96464']]} />
        </linearGradient>
        <linearGradient id="armSide" gradientUnits="userSpaceOnUse" x1="1140" y1="0" x2="1480" y2="0">
          <Stops list={[[0, '#ff8080'], [0.5, '#f27a7a'], [0.85, '#e57373'], [0.87, '#c06060'], [1, '#8b4444']]} />
        </linearGradient>
        <linearGradient id="cone" gradientUnits="userSpaceOnUse" x1="882" y1="0" x2="970" y2="0">
          <Stops list={[[0, '#a75454'], [0.6, '#ee7878'], [0.8, '#ff8484'], [1, '#a75454']]} />
        </linearGradient>
        <linearGradient id="pin" gradientUnits="userSpaceOnUse" x1="882" y1="0" x2="953" y2="0">
          <Stops list={[[0, '#ff9c9c'], [0.25, '#ffa4a4'], [0.35, '#ff8080'], [0.85, '#8f4646']]} />
        </linearGradient>
        <linearGradient id="pinBase" gradientUnits="userSpaceOnUse" x1="885" y1="0" x2="953" y2="0">
          <Stops list={[[0, '#d96c6c'], [0.5, '#f47b7b'], [0.8, '#ffd4d4'], [1, '#ff9898']]} />
        </linearGradient>
        <linearGradient id="holeShade">
          <Stops list={[[0, '#8b4444'], [0.4, '#ff8585'], [0.6, '#ffe3e3'], [0.75, '#ff8585'], [1, '#a04f4f']]} />
        </linearGradient>
        <filter id="soft" x="-20%" y="-20%" width="140%" height="140%">
          <feGaussianBlur stdDeviation="14" />
        </filter>
        <clipPath id="lowerClip">
          <path d="M325 576L560 563H843L920 617 960 645 1000 655 1055 643 1140 646 1145 700 1155 735 1433 733 1479 760 1480 848 1300 868 1080 896 870 880 830 865 760 835 640 795 530 768 375 750 300 733z" />
        </clipPath>
      </defs>

      <g transform="translate(850 440) scale(.33333)">
        {/* web behind the right opening */}
        <path d="M838 132L1030 120 1075 275C1050 310 1030 350 1010 410L998 470 982 510 984 555 1003 600 1018 648 960 650 915 620 862 555 843 490 828 180z" fill="#8b4444" />

        {/* post on the left */}
        <path d="M325 293L370 282 555 280 556 480 322 493 316 400 320 322z" fill="#f27a7a" />
        <path d="M325 293L370 282 375 395 353 405 357 428 378 446 332 460 322 493 316 400 320 322z" fill="#e67474" />
        <path d="M318 322L328 300 333 460 322 493 316 400z" fill="#c06060" />
        <path d="M375 395H553V424H378L357 428 353 405z" fill="url(#slot)" />
        <path d="M332 460L380 447H557V467L420 486 325 494 350 466z" fill="#8b4444" />
        <path d="M321 494L420 487 557 467 569 552 556 566 325 576z" fill="url(#post)" />

        {/* lower part */}
        <path d="M70 632C90 610 150 592 210 583L325 575 560 563 600 540 700 700 375 750 300 733 70 695z" fill="url(#lobe)" />
        <path d="M70 632C90 610 150 592 210 583 150 615 100 645 70 695z" fill="#f67c7c" />
        <path d="M560 563H843L920 617 960 645 1000 655 1055 643 1140 646 1145 700 1155 735 1433 733 1479 760 1480 848 1300 868 1080 896 870 880 830 865 760 835 640 795 530 768 375 750 510 615z" fill="url(#belly)" />
        <g clipPath="url(#lowerClip)">
          <path d="M375 758C440 680 520 610 610 570L790 565 900 600 760 640 560 775z" fill="#8b4444" filter="url(#soft)" />
          <path d="M960 630C1020 690 1080 770 1110 825L1200 815 1300 740 1140 640z" fill="#e27171" filter="url(#soft)" />
          <path d="M1080 700C1110 730 1120 770 1160 800" stroke="#ff8282" strokeWidth="34" fill="none" filter="url(#soft)" />
          <path d="M950 655C1010 700 1070 780 1110 835" stroke="#904747" strokeWidth="18" fill="none" filter="url(#soft)" />
          <path d="M780 585L930 630 1000 680" stroke="#8b4444" strokeWidth="24" fill="none" filter="url(#soft)" />
        </g>
        <path d="M850 877C880 850 1000 845 1120 832L1250 820 1480 824V848L1300 868 1080 896 870 880z" fill="#8b4444" opacity=".92" />

        {/* lower right arm */}
        <path d="M1130 765L1145 720 1170 733 1433 733C1460 738 1478 742 1479 756V826L1432 822H1260C1210 808 1170 785 1130 765z" fill="url(#armSide)" />
        <path d="M1143 680L1205 680 1210 693 1227 697V732H1170C1150 725 1143 715 1143 700z" fill="#a85454" />
        <path d="M1102 658L1223 676V662L1140 646 1055 643 1048 655z" fill="#c96565" />
        <path d="M1102 658L1223 676 1205 692 1150 684 1108 676z" fill="#8b4444" />
        <path d="M993 652L1050 645V672C1030 687 1005 680 993 652z" fill="#ff8888" />
        <ellipse cx="1362" cy="845" rx="42" ry="10" fill="url(#holeShade)" />

        {/* body */}
        <path d="M120 168C300 130 400 105 500 88 700 60 800 48 900 43L1035 43 975 52C930 85 925 108 915 128L838 132 828 215H550L540 205 270 200z" fill="url(#top)" />
        <path d="M549 210H829L828 180 843 490 865 555 920 617C850 592 820 580 780 574 720 568 650 568 590 582L560 563 568 550z" fill="url(#body)" />
        <path d="M549 209H829L832 300H552z" fill="url(#bodyTop)" />
        <path d="M566 470H842L843 490 865 555 920 617C850 592 820 580 780 574 720 568 650 568 590 582L560 563 568 550z" fill="url(#fade)" />
        <path d="M549 228L567 550" stroke="#ffcaca" strokeWidth="4" />
        <path d="M541 204L549 225V280" stroke="#8b4444" strokeWidth="5" fill="none" />

        {/* upper left ear */}
        <path d="M50 212C50 190 70 172 120 168L400 192 520 200 270 212 52 284z" fill="url(#earLeft)" />
        <path d="M120 168L260 140 560 198 400 194 272 197C210 196 160 182 120 168z" fill="#f07979" />
        <path d="M52 278C100 240 180 214 270 208L520 201 540 206 549 225V280H372L325 293 320 322 200 320C120 315 70 305 52 284z" fill="#8b4444" />
        <ellipse cx="287" cy="270" rx="30" ry="7" fill="url(#holeShade)" />

        {/* upper right ear */}
        <path d="M915 128C925 100 935 70 975 52L1035 43 1032 155z" fill="#9a4c4c" />
        <path d="M1030 45L1150 46 1250 55C1300 62 1335 70 1342 90 1390 94 1440 102 1449 122V180L1400 205 1205 225 1170 255 1037 252z" fill="url(#earRight)" />
        <path d="M1035 44L1150 46 1250 55 1330 72" stroke="#d26969" strokeWidth="4" fill="none" />
        <path d="M1112 210V180C1125 160 1145 152 1300 150 1390 150 1440 158 1449 180 1430 205 1390 210 1205 225L1203 240 1112 225z" fill="#8b4444" />
        <path d="M1114 190L1203 196V238L1114 222z" fill="#a85454" />
        <path d="M1112 222V180L1125 155" stroke="#ff9a9a" strokeWidth="4" fill="none" />
        <path d="M1080 222H1112L1203 238 1190 258 1205 264V272L1180 278 1070 270 1037 254 1112 252 1080 238z" fill="#9f4f4f" />
        <path d="M1080 222L1190 242V258L1112 246 1080 238z" fill="#864141" />
        <ellipse cx="1333" cy="188" rx="42" ry="10" fill="url(#holeShade)" />
        <path d="M950 176L1030 158 1037 252 952 265z" fill="#ff8888" />

        {/* details seen through the opening */}
        <path d="M882 338V280C895 240 915 215 935 200L962 270 970 338z" fill="url(#cone)" />
        <path d="M882 347H945L930 400H882z" fill="url(#pin)" />
        <path d="M882 400L953 399V430L930 435H888z" fill="url(#pinBase)" />
        <path d="M895 443L935 465V495" stroke="#c96464" strokeWidth="3" fill="none" />
        <path d="M867 535L985 585" stroke="#a85454" strokeWidth="4" />
        <path d="M867 535L890 565 920 615 867 562z" fill="#b95d5d" />

        {/* spin center */}
        <path d="M703 490H773" stroke="#f03030" strokeWidth="3" />
        <path d="M773 490V522L775 558" stroke="#30f0f0" strokeWidth="3" fill="none" />
        <path d="M773 490L758 503" stroke="#30e030" strokeWidth="3" />
        <circle cx="703" cy="489" r="8" fill="#f03030" />
        <circle cx="758" cy="503" r="6" fill="#30f020" />
        <circle cx="775" cy="558" r="8" fill="#30f0f0" />
      </g>
    </svg>
  );
}

function GraphicsArea() {
  return (
    <main className="relative grow bg-[#e8eaed]">
      <Model />
      <div className="relative mx-auto mt-[6px] flex h-9 w-[364px] items-center justify-between border border-[#9fa2a4] bg-[#f8f8f8] pl-[3px] pr-[5px]">
        {viewTools.map(t => (
          <button
            key={t.icon}
            aria-label={t.name}
            className={`relative flex h-[29px] w-[29px] items-center justify-center border ${
              t.on ? 'border-[#a6a8aa] bg-[#dfe1e3]' : 'border-transparent'
            }`}
          >
            {icons[t.icon]}
            {t.more && (
              <svg width="5" height="5" viewBox="0 0 5 5" className="absolute bottom-0 right-0">
                <path d="M5 0v5H0z" fill={DARK} />
              </svg>
            )}
          </button>
        ))}
      </div>
    </main>
  );
}

/* ---------- status bar ---------- */

function Watermark() {
  return (
    <div className="pointer-events-none absolute bottom-[5px] right-[5px] flex h-[62px] w-[206px] items-start bg-white/35">
      <svg width="58" height="60" viewBox="0 0 58 60" fill="none" className="shrink-0">
        <path d="M20 48C10 40 0 22 4 11S24 3 34 14s9 22 6 31c-3 6-12 6-20 3z" fill="#fff" opacity=".4" />
        <path d="M22 49C10 42 0 22 4 11S24 3 34 14s9 20 7 28" stroke="#8ea3b5" strokeWidth="3.500" opacity=".75" />
        <path d="M37 27c9-9 19-6 20 2S47 55 39 57s-10-3-9-7" stroke="#e88b90" strokeWidth="3.500" opacity=".85" />
      </svg>
      <div className="grow">
        <p className="pl-3 pt-[3px] text-[29px] font-bold leading-9 text-[#8fcfaa]">野火论坛</p>
        <p className="text-[16px] leading-5 text-[#b5dccd]">www.proewildfire.cn</p>
      </div>
    </div>
  );
}

function StatusBar() {
  return (
    <footer className="relative shrink-0">
      <div className="flex h-[41px] items-center border-t-2 border-[#97999b] bg-[#eef0f2] pl-[7px] pr-5 pt-px">
        <button aria-label="模型树" className="flex h-[26px] w-[26px] items-center justify-center border border-[#a6a8aa] bg-[#dfe1e3]">
          <svg width="20" height="20" viewBox="0 0 20 20" fill="none">
            <path d="M8 4v12M10 10h6" stroke="#888" />
            <path d="M6.500 1h3.500v3.500H6.500zM6.500 8.200h3.500v3.500H6.500zM6.500 15.500h3.500V19H6.500zM15.500 8.200H19v3.500h-3.500z" fill="#fff" stroke="#333" strokeWidth="1.300" />
          </svg>
        </button>
        <button aria-label="浏览器" className="ml-[7px]">{icons.globe}</button>
        <button aria-label="全屏" className="ml-[10px]">{icons.square}</button>
        <span className="ml-[13px] h-[26px] w-px bg-[#b0b2b4]" />
        <span className="grow" />
        <span className="mr-12 h-[31px] w-px bg-[#b0b2b4]" />
        <span className="mr-[2px] h-[31px] w-px bg-[#b0b2b4]" />
        <div className="flex h-[30px] border border-[#b9bbbd] bg-[#fafafa]">
          <button aria-label="查找" className="flex w-[33px] items-center justify-center">{icons.binoculars}</button>
          <button aria-label="查找选项" className="flex w-[17px] items-center justify-center border-l border-[#b9bbbd]"><Caret /></button>
        </div>
        <span className="ml-[2px] h-[31px] w-px bg-[#b0b2b4]" />
        <div className="relative ml-28 flex w-[205px]">
          <select
            aria-label="选择过滤器"
            className="h-7 w-full appearance-none border border-[#a9abad] bg-[#fcfcfc] pl-2 text-[15px] text-[#363636]"
          >
            <option>几何</option>
          </select>
          <span className="pointer-events-none absolute inset-y-0 right-0 flex w-[19px] items-center justify-center border-l border-[#b9bbbd]">
            <Caret />
          </span>
        </div>
      </div>
      <div className="flex h-[9px] bg-[#111]">
        <span className="ml-[186px] w-10 bg-[#444]" />
        <span className="ml-px w-1 bg-[#3a3a3a]" />
      </div>
      <Watermark />
    </footer>
  );
}

function App() {
  const [activeTab, setActiveTab] = useState('模型');

  return (
    <div className="flex h-screen flex-col overflow-hidden bg-[#e2e2e2] font-['Noto_Sans','Noto_Sans_CJK_SC',sans-serif]">
      <TitleBar />
      <TabBar active={activeTab} onSelect={setActiveTab} />
      <Ribbon />
      <div className="flex min-h-0 grow">
        <Navigator />
        <GraphicsArea />
      </div>
      <StatusBar />
    </div>
  );
}

export default App;
